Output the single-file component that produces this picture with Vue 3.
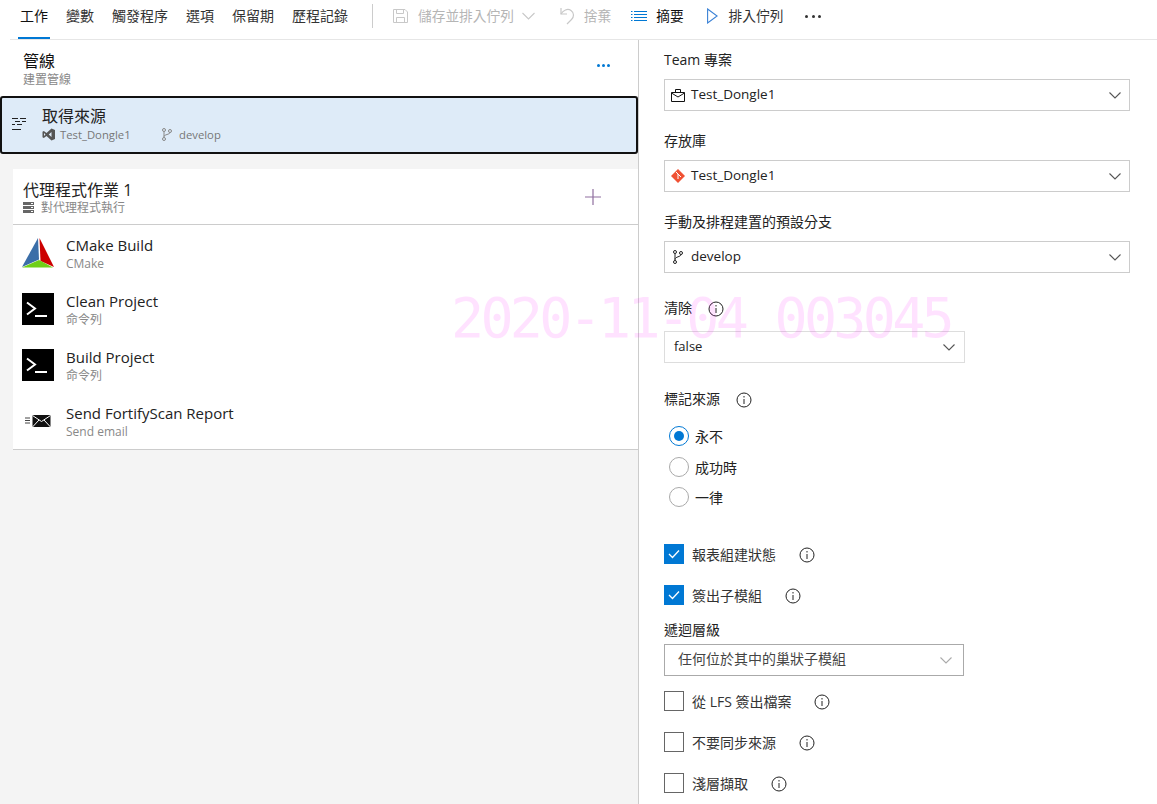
<template>
  <div class="page">
    <div class="toolbar">
      <div class="tabs">
        <span v-for="(tab, i) in tabs" :key="tab" class="tab" :class="{ active: i === 0 }">{{ tab }}</span>
      </div>
      <span class="divider"></span>
      <svg class="save" width="15" height="16" viewBox="0 0 15 16" fill="none" stroke="#c8c8c8">
        <path d="M.5 1.500h11.500l2.500 2.500v10.500H.5z" />
        <path d="M3.500 1.500v4h7v-4M3.500 14.500v-5h8v5" />
      </svg>
      <span class="tool off save-label">儲存並排入佇列</span>
      <svg class="chev" width="13" height="8" viewBox="0 0 13 8" fill="none" stroke="#c8c8c8" stroke-width="1.100">
        <path d="M.5 1l6 6 6-6" />
      </svg>
      <svg class="undo" width="15" height="18" viewBox="0 0 15 18" fill="none" stroke="#c8c8c8" stroke-width="1.200">
        <path d="M1 1v6h6" />
        <path d="M1 7C3 3.500 7.500 1 11 3.500c3.500 2.500 3 6.500.5 9L7 17" />
      </svg>
      <span class="tool off discard">捨棄</span>
      <svg class="list" width="16" height="12" viewBox="0 0 16 12" stroke="#0078d4">
        <path d="M0 1.500h1.500M3 1.500h13M0 4.500h1.500M3 4.500h13M0 7.500h1.500M3 7.500h13M0 10.500h1.500M3 10.500h13" />
      </svg>
      <span class="tool summary">摘要</span>
      <svg class="play" width="11" height="16" viewBox="0 0 11 16" fill="none" stroke="#3b82d6" stroke-width="1.100">
        <path d="M.6 1l9.500 7-9.500 7z" />
      </svg>
      <span class="tool queue">排入佇列</span>
      <span class="more">
        <i></i><i></i><i></i>
      </span>
    </div>

    <div class="body">
      <div class="left">
        <div class="pipe-head">
          <div>
            <div class="pipe-title">管線</div>
            <div class="pipe-sub">建置管線</div>
          </div>
          <span class="pipe-dots"><i></i><i></i><i></i></span>
        </div>

        <div class="source">
          <svg class="source-icon" width="15" height="14" viewBox="0 0 15 14" stroke="#222">
            <path d="M0 1.500h6M8 1.500h6M3 4.500h5M10 4.500h4M0 7.500h3M5 7.500h5M0 12.500h9" />
          </svg>
          <div>
            <div class="source-title">取得來源</div>
            <div class="source-meta">
              <svg class="vs" width="13" height="13" viewBox="0 0 13 13">
                <path fill="#555" d="M9.500.5L13 2v9l-3.500 1.500L4.500 8 1.800 10 .5 9.300V3.700L1.800 3l2.700 2zM9.500 4L6.700 6.500l2.800 2.500zM2 5v3l1.500-1.500z" fill-rule="evenodd" />
              </svg>
              <span class="repo">Test_Dongle1</span>
              <svg class="branch" width="12" height="13" viewBox="0 0 12 13" fill="none" stroke="#888">
                <circle cx="3" cy="2" r="1.500" /><circle cx="3" cy="11" r="1.500" /><circle cx="9" cy="3" r="1.500" />
                <path d="M3 3.500v6M9 4.500c0 2-6 2-6 4" />
              </svg>
              <span>develop</span>
            </div>
          </div>
        </div>

        <div class="job">
          <div class="job-head">
            <div>
              <div class="job-title">代理程式作業 1</div>
              <div class="job-sub">
                <svg width="11" height="11" viewBox="0 0 11 11">
                  <path fill="#666" d="M0 0h11v3H0zM0 4h11v3H0zM0 8h11v3H0z" />
                  <path fill="#fff" d="M8 1h2v1H8zM8 5h2v1H8zM8 9h2v1H8z" />
                </svg>
                <span>對代理程式執行</span>
              </div>
            </div>
            <svg class="plus" width="16" height="16" viewBox="0 0 16 16" stroke="#8f6f9f" stroke-width="1.200">
              <path d="M8 0v16M0 8h16" />
            </svg>
          </div>

          <div v-for="task in tasks" :key="task.name" class="task">
            <div class="task-icon">
              <svg v-if="task.icon === 'cmake'" width="32" height="32" viewBox="0 0 32 32">
                <path fill="#3b6ea8" d="M16 1L0 30l17-7.500z" />
                <path fill="#cc0000" d="M17.500 1L32 30l-13.500-6z" />
                <path fill="#6fcf17" d="M0 30.500l17-7.500 14 7.500z" />
              </svg>
              <svg v-else-if="task.icon === 'cmd'" width="32" height="32" viewBox="0 0 32 32">
                <path fill="#000" d="M0 0h32v32H0z" />
                <path fill="none" stroke="#fff" stroke-width="2" d="M5 9.500l8 6-8 6" />
                <path stroke="#fff" stroke-width="2" d="M13 23h12" />
              </svg>
              <svg v-else class="mail" width="26" height="14" viewBox="0 0 26 14">
                <path fill="none" stroke="#444" d="M0 4h5M0 6.500h5M0 9h5" />
                <path fill="#111" d="M7.500 1h18v12h-18z" />
                <path fill="none" stroke="#fff" d="M7.500 1.500l9 6 9-6M7.500 13l6.500-7M25.500 13L19 6" />
              </svg>
            </div>
            <div>
              <div class="task-name">{{ task.name }}</div>
              <div class="task-sub">{{ task.sub }}</div>
            </div>
          </div>
        </div>

        <div class="wm">2020-11-04 003045</div>
      </div>

      <div class="right">
        <label class="lbl first">Team 專案</label>
        <div class="sel">
          <svg width="14" height="13" viewBox="0 0 14 13" fill="none" stroke="#111">
            <path d="M.5 3.500h13v9H.5zM4.500 3.500v-3h5v3M.5 4l6.500 4 6.500-4" />
          </svg>
          <span class="val">Test_Dongle1</span>
          <svg class="arrow" width="12" height="7" viewBox="0 0 12 7" fill="none" stroke="#555" stroke-width="1.100"><path d="M.5.500L6 6l5.500-5.500" /></svg>
        </div>

        <label class="lbl">存放庫</label>
        <div class="sel">
          <svg width="14" height="14" viewBox="0 0 14 14">
            <path fill="#f05133" d="M7 0l7 7-7 7-7-7z" />
            <path fill="none" stroke="#fff" d="M5 3l4 4M7 5v5M7 5l3 3" />
          </svg>
          <span class="val">Test_Dongle1</span>
          <svg class="arrow" width="12" height="7" viewBox="0 0 12 7" fill="none" stroke="#555" stroke-width="1.100"><path d="M.5.500L6 6l5.500-5.500" /></svg>
        </div>

        <label class="lbl">手動及排程建置的預設分支</label>
        <div class="sel">
          <svg class="branch-sel" width="12" height="14" viewBox="0 0 12 14" fill="none" stroke="#222">
            <circle cx="3" cy="2" r="1.500" /><circle cx="3" cy="12" r="1.500" /><circle cx="9" cy="3" r="1.500" />
            <path d="M3 3.500v7M9 4.500c0 2.500-6 2-6 5" />
          </svg>
          <span class="val">develop</span>
          <svg class="arrow" width="12" height="7" viewBox="0 0 12 7" fill="none" stroke="#555" stroke-width="1.100"><path d="M.5.500L6 6l5.500-5.500" /></svg>
        </div>

        <label class="lbl clean">清除
          <svg class="info" width="16" height="16" viewBox="0 0 16 16" fill="none" stroke="#222"><circle cx="8" cy="8" r="7" /><path d="M8 7v5M8 4v1.500" /></svg>
        </label>
        <div class="sel short light">
          <span class="plain val">false</span>
          <svg class="arrow" width="12" height="7" viewBox="0 0 12 7" fill="none" stroke="#555" stroke-width="1.100"><path d="M.5.500L6 6l5.500-5.500" /></svg>
        </div>

        <label class="lbl tag">標記來源
          <svg class="info" width="16" height="16" viewBox="0 0 16 16" fill="none" stroke="#222"><circle cx="8" cy="8" r="7" /><path d="M8 7v5M8 4v1.500" /></svg>
        </label>
        <div class="radios">
          <div v-for="(r, i) in radios" :key="r" class="radio" :class="{ on: i === 0 }">
            <span class="dot"></span>
            <span>{{ r }}</span>
          </div>
        </div>

        <div class="check on first-check">
          <span class="box"><svg width="12" height="10" viewBox="0 0 12 10" fill="none" stroke="#fff" stroke-width="1.300"><path d="M1 5l3.500 3.500L11 1.500" /></svg></span>
          <span>報表組建狀態</span>
          <svg class="info" width="16" height="16" viewBox="0 0 16 16" fill="none" stroke="#222"><circle cx="8" cy="8" r="7" /><path d="M8 7v5M8 4v1.500" /></svg>
        </div>
        <div class="check on">
          <span class="box"><svg width="12" height="10" viewBox="0 0 12 10" fill="none" stroke="#fff" stroke-width="1.300"><path d="M1 5l3.500 3.500L11 1.500" /></svg></span>
          <span>簽出子模組</span>
          <svg class="info" width="16" height="16" viewBox="0 0 16 16" fill="none" stroke="#222"><circle cx="8" cy="8" r="7" /><path d="M8 7v5M8 4v1.500" /></svg>
        </div>

        <label class="lbl depth">遞迴層級</label>
        <div class="sel short dark">
          <span class="plain indent val">任何位於其中的巢狀子模組</span>
          <svg class="arrow" width="12" height="7" viewBox="0 0 12 7" fill="none" stroke="#aaa" stroke-width="1.100"><path d="M.5.500L6 6l5.500-5.500" /></svg>
        </div>

        <div v-for="(c, i) in checks" :key="c" class="check" :class="{ 'after-sel': i === 0 }">
          <span class="box"></span>
          <span>{{ c }}</span>
          <svg class="info" width="16" height="16" viewBox="0 0 16 16" fill="none" stroke="#222"><circle cx="8" cy="8" r="7" /><path d="M8 7v5M8 4v1.500" /></svg>
        </div>
      </div>
    </div>
  </div>
</template>

<script setup>
const tabs = ['工作', '變數', '觸發程序', '選項', '保留期', '歷程記錄']

const tasks = [
  { name: 'CMake Build', sub: 'CMake', icon: 'cmake' },
  { name: 'Clean Project', sub: '命令列', icon: 'cmd' },
  { name: 'Build Project', sub: '命令列', icon: 'cmd' },
  { name: 'Send FortifyScan Report', sub: 'Send email', icon: 'mail' }
]

const radios = ['永不', '成功時', '一律']
const checks = ['從 LFS 簽出檔案', '不要同步來源', '淺層擷取']
</script>

<style>
html, body {
  margin: 0;
  background: #fff;
}
</style>

<style scoped>
.page {
  width: 1157px;
  height: 804px;
  overflow: hidden;
  font-family: "Open Sans", "Noto Sans CJK TC", sans-serif;
  font-size: 14px;
  color: #222;
  background: #fff;
}
.toolbar {
  display: flex;
  align-items: center;
  height: 39px;
  margin-left: 10px;
  padding-left: 8px;
  border-bottom: 1px solid #e6e6e6;
}
.tabs {
  display: flex;
  align-self: stretch;
  gap: 14px;
}
.tab {
  padding: 6px 2px 0;
  height: 31px;
  line-height: 20px;
  color: #333;
}
.tab.active {
  color: #111;
  border-bottom: 2px solid #0078d4;
}
.divider {
  width: 1px;
  height: 24px;
  background: #ccc;
  margin: -7px 0 0 22px;
}
.toolbar > svg,
.toolbar > .tool,
.toolbar > .more {
  margin-top: -7px;
}
.tool {
  font-size: 13.7px;
  line-height: 20px;
  white-space: nowrap;
}
.off { color: #b5b5b5; }
.save { margin-left: 20px; }
.save-label { margin-left: 10px; }
.chev { margin-left: 8px; }
.undo { margin-left: 25px; }
.discard { margin-left: 9px; }
.list { margin-left: 20px; }
.summary { margin-left: 9px; color: #111; }
.play { margin-left: 23px; }
.queue { margin-left: 11px; color: #333; }
.more {
  display: flex;
  gap: 3.500px;
  margin-left: 22px;
}
.more i {
  width: 3px;
  height: 3px;
  border-radius: 50%;
  background: #333;
}
.body {
  display: flex;
  height: 764px;
}
.left {
  position: relative;
  width: 638px;
  background: #f4f4f4;
}
.pipe-head {
  display: flex;
  justify-content: space-between;
  align-items: center;
  height: 56px;
  padding: 0 28px 0 23px;
  background: #fff;
}
.pipe-title {
  font-size: 16px;
  line-height: 22px;
  margin-bottom: 1px;
  color: #111;
}
.pipe-sub {
  font-size: 12px;
  line-height: 14px;
  color: #888;
}
.pipe-dots {
  display: flex;
  gap: 2px;
  margin-bottom: 5px;
}
.pipe-dots i {
  width: 3px;
  height: 3px;
  border-radius: 50%;
  background: #0078d4;
}
.source {
  display: flex;
  align-items: center;
  gap: 15px;
  height: 58px;
  box-sizing: border-box;
  padding: 0 0 3px 10px;
  background: #deebf8;
  border: 2px solid #111;
  border-radius: 3px;
}
.source-icon {
  flex: none;
}
.source-title {
  font-size: 16px;
  line-height: 22px;
  color: #222;
}
.source-meta {
  display: flex;
  align-items: center;
  font-size: 11.300px;
  line-height: 16px;
  color: #777;
}
.repo {
  margin-left: 5px;
  width: 101px;
}
.branch {
  margin-right: 6px;
}
.job {
  margin: 15px 0 0 13px;
  background: #fff;
  border-bottom: 1px solid #ccc;
}
.job-head {
  display: flex;
  justify-content: space-between;
  align-items: center;
  height: 55px;
  padding: 0 37px 0 10px;
  border-bottom: 1px solid #ccc;
}
.job-title {
  font-size: 16px;
  line-height: 22px;
  color: #222;
}
.job-sub {
  display: flex;
  align-items: center;
  gap: 7px;
  font-size: 12px;
  line-height: 14px;
  color: #888;
}
.task {
  display: flex;
  align-items: center;
  gap: 12px;
  height: 56px;
  padding-left: 9px;
}
.task-icon {
  display: flex;
  justify-content: center;
  align-items: center;
  width: 32px;
  height: 32px;
}
.task-name {
  font-size: 15px;
  line-height: 20px;
  margin-bottom: 1px;
  color: #222;
}
.task-sub {
  font-size: 12px;
  line-height: 16px;
  color: #888;
}
.wm {
  position: absolute;
  left: 451px;
  top: 243px;
  font-family: "DejaVu Sans Mono", monospace;
  font-size: 55px;
  letter-spacing: -3.700px;
  line-height: 70px;
  white-space: nowrap;
  color: #ff00ff;
  opacity: 0.11;
  pointer-events: none;
  z-index: 5;
}
.right {
  flex: 1;
  border-left: 1px solid #ccc;
  padding-left: 25px;
  display: flex;
  flex-direction: column;
  align-items: flex-start;
}
.lbl {
  display: flex;
  align-items: center;
  height: 20px;
  margin-top: 20px;
  margin-bottom: 9px;
  line-height: 18px;
  color: #222;
}
.lbl.first {
  margin-top: 10px;
}
.sel {
  display: flex;
  align-items: center;
  gap: 6px;
  width: 466px;
  height: 32px;
  box-sizing: border-box;
  padding: 0 8px 0 6px;
  border: 1px solid #ccc;
  color: #222;
}
.sel .arrow {
  margin-left: auto;
}
.val {
  font-size: 13.500px;
  line-height: 18px;
  margin-top: -2px;
}
.branch-sel {
  margin-left: 1px;
  margin-right: 1px;
}
.sel.short {
  width: 300px;
}
.sel.short.light {
  width: 301px;
  padding-right: 9px;
  border-color: #ddd;
  background: #fff;
}
.sel.short.dark {
  padding-right: 11px;
  border-color: #aaa;
}
.plain {
  margin-left: 3px;
  font-size: 13px;
}
.indent {
  margin-left: 7px;
  font-size: 14px;
  color: #444;
}
.lbl.clean {
  margin-top: 25px;
  margin-bottom: 13px;
}
.lbl.tag {
  margin-top: 26px;
  margin-bottom: 17px;
}
.info {
  margin-left: 16px;
  margin-top: 1px;
}
.radios {
  display: flex;
  flex-direction: column;
  gap: 10.500px;
  margin-left: 5px;
}
.radio {
  display: flex;
  align-items: center;
  gap: 6px;
  height: 20px;
}
.dot {
  width: 18px;
  height: 18px;
  border: 1px solid #aaa;
  border-radius: 50%;
  position: relative;
}
.radio.on .dot {
  border-color: #0078d4;
}
.radio.on .dot::after {
  content: "";
  position: absolute;
  left: 4px;
  top: 4px;
  width: 10px;
  height: 10px;
  border-radius: 50%;
  background: #0078d4;
}
.check {
  display: flex;
  align-items: center;
  height: 20px;
  margin-top: 21px;
  color: #333;
}
.check .info {
  margin-left: 23px;
}
.box {
  display: flex;
  justify-content: center;
  align-items: center;
  width: 20px;
  height: 20px;
  box-sizing: border-box;
  margin-right: 8px;
  border: 1px solid #666;
}
.check.on .box {
  background: #0078d4;
  border-color: #0078d4;
}
.first-check {
  margin-top: 37px;
}
.lbl.depth {
  margin-top: 15px;
  margin-bottom: 4px;
}
.after-sel {
  margin-top: 15px;
}
</style>
